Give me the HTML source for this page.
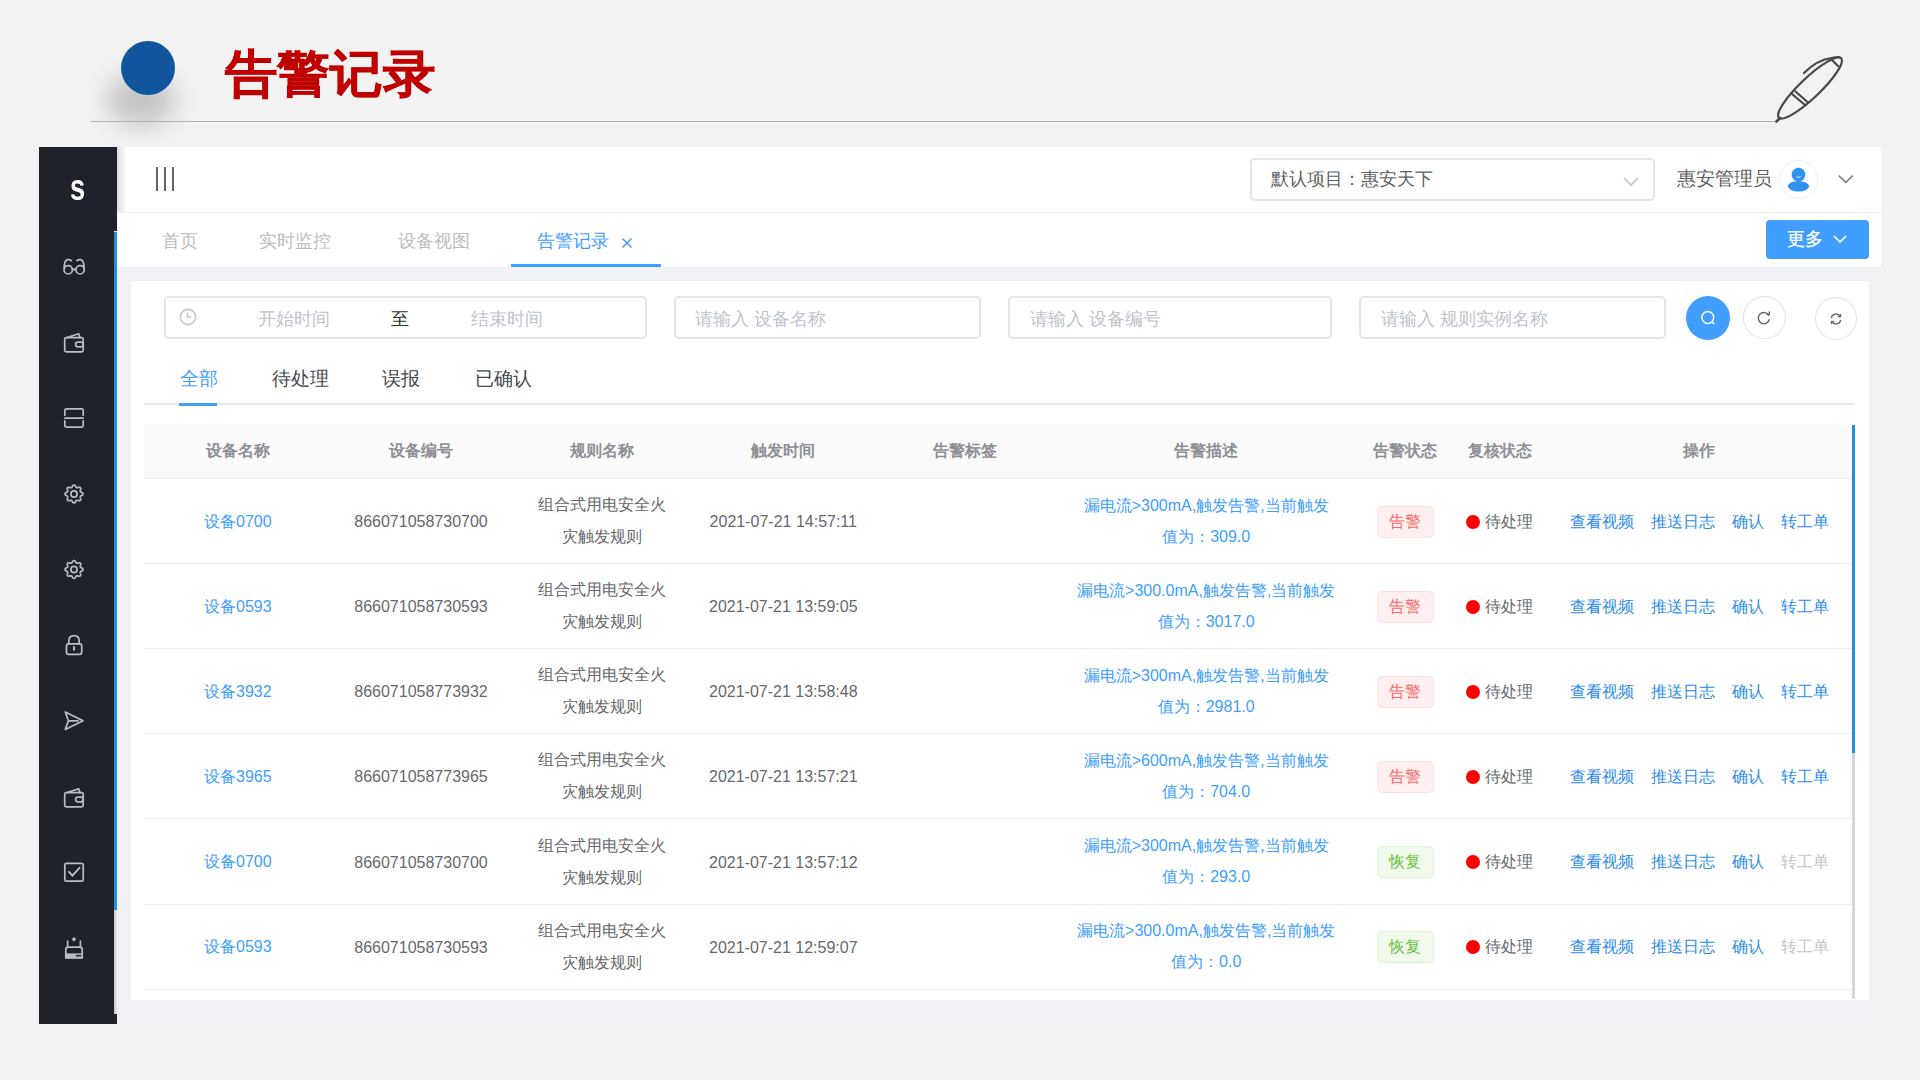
<!DOCTYPE html>
<html><head><meta charset="utf-8">
<style>
*{margin:0;padding:0;box-sizing:border-box}
html,body{width:1920px;height:1080px;overflow:hidden;background:#f2f2f2;font-family:"Liberation Sans",sans-serif;color:#606266}
.a{position:absolute}
.t{position:absolute;white-space:nowrap;line-height:1}
#title{left:225px;top:49px;font-size:50px;font-weight:bold;color:#c00000;-webkit-text-stroke:0.6px #c00000;transform:scaleX(1.05);transform-origin:0 0}
#hline{left:91px;top:121px;width:1686px;height:1px;background:#b3b3b3}
#side{left:39px;top:147px;width:75px;height:877px;background:#1f222a}
#sidebot{left:39px;top:1014px;width:78px;height:10px;background:#1f222a}
#sbar{left:113.5px;top:232px;width:3.5px;height:678px;background:#1e8fe6}
#strack{left:113.5px;top:910px;width:3.5px;height:104px;background:linear-gradient(90deg,#c3c4c9,#eceef2)}
#main{left:117px;top:147px;width:1764px;height:877px;background:#f0f1f4}
#hdr{left:117px;top:147px;width:1764px;height:66px;background:#fff;border-bottom:1px solid #f0f0f0}
#tabs{left:117px;top:213px;width:1764px;height:54px;background:#fff}
#card{left:131px;top:281px;width:1738px;height:719px;background:#fff}
.inp{position:absolute;top:295.5px;height:43px;border:2px solid #e3e5ea;border-radius:5px;background:#fff}
.ph{color:#c0c4cc;font-size:18px}
.th{position:absolute;top:444px;font-size:16px;color:#8d8f94;font-weight:bold;line-height:1;white-space:nowrap}
.cell{position:absolute;font-size:16px;line-height:1;white-space:nowrap;color:#66686c}
.lk{color:#409eff}
.rowline{position:absolute;left:144px;width:1708px;height:1px;background:#ebeef5}
.tag{position:absolute;width:57px;height:32px;border-radius:5px;font-size:16px;line-height:30px;text-align:center}
.tr{background:#fef0f0;border:1px solid #fde2e2;color:#f56c6c}
.tg{background:#f0f9eb;border:1px solid #e1f3d8;color:#67c23a}
.dot{position:absolute;width:14px;height:14px;border-radius:50%;background:#f00}
.ico{position:absolute;left:62px;width:24px;height:24px}
</style></head><body>
<!-- slide header -->
<div class="a" style="left:107px;top:74px;width:68px;height:52px;border-radius:50%;background:rgba(0,0,0,0.19);filter:blur(12px)"></div>
<div class="a" style="left:121px;top:41px;width:54px;height:54px;border-radius:50%;background:#11559d"></div>
<div class="t" id="title">告警记录</div>
<div class="a" id="hline"></div>
<svg class="a" style="left:1740px;top:40px" width="120" height="100" viewBox="1740 40 120 100">
<g fill="none" stroke="#474747" stroke-width="2.2" stroke-linecap="round">
<ellipse cx="1810" cy="88" rx="43" ry="10" transform="rotate(-43.6 1810 88)"/>
<path d="M1776.5 121.5 L1780 118" stroke-width="2.6"/>
<path d="M1804 73 Q1817 60 1831 58 Q1837 57 1839 57"/>
<path d="M1831 59 L1838 66"/>
<path d="M1792 94 L1805 105"/>
<path d="M1795.5 91.5 L1808 102.5"/>
</g>
</svg>

<div class="a" id="main"></div>
<div class="a" id="side"></div>
<div class="a" id="sidebot"></div>
<div class="a" style="left:113px;top:147px;width:4.4px;height:84px;background:#1f222a"></div>
<div class="a" id="sbar"></div>
<div class="a" id="strack"></div>
<div class="a" id="hdr"></div>
<div class="a" id="tabs"></div>
<div class="a" style="left:117px;top:147px;width:10px;height:65px;background:linear-gradient(90deg,rgba(0,0,0,0.13),rgba(0,0,0,0))"></div>
<div class="a" id="card"></div>

<!--ICONS-->
<svg class="a" style="left:0;top:0" width="120" height="1080" viewBox="0 0 120 1080"><g fill="none" stroke="#b9bdc6" stroke-width="1.7" stroke-linecap="round"><circle cx="68.2" cy="269.8" r="4.2"/><circle cx="80.1" cy="269.8" r="4.2"/><path d="M72.2 268.6 Q74.15 270.6 76.1 268.6"/><path d="M64.3 268.5 Q64 260.5 67.5 259.6 Q70 259.3 71.3 260.6"/><path d="M84 268.5 Q84.3 260.5 80.8 259.6 Q78.3 259.3 77 260.6"/><rect x="64.7" y="337.6" width="18.5" height="14.3" rx="1.6"/><path d="M67 337.6 L78.6 333.8 L80 337.6"/><rect x="75.6" y="342.2" width="7.6" height="4.6" rx="2.3"/><path d="M64.8 415.2 V410.4 Q64.8 408.8 66.4 408.8 H81.6 Q83.2 408.8 83.2 410.4 V415.2"/><path d="M64.8 418.1 H83.2"/><path d="M64.8 420.8 V425.6 Q64.8 427.2 66.4 427.2 H81.6 Q83.2 427.2 83.2 425.6 V420.8"/><path d="M82.90 494.00 L82.88 494.23 L82.83 494.46 L82.74 494.69 L82.61 494.90 L82.44 495.11 L82.24 495.30 L81.97 495.48 L81.53 495.60 L81.25 495.74 L81.04 495.89 L80.85 496.03 L80.69 496.17 L80.56 496.32 L80.46 496.48 L80.37 496.64 L80.32 496.81 L80.28 497.00 L80.27 497.20 L80.28 497.41 L80.31 497.64 L80.36 497.90 L80.45 498.19 L80.68 498.59 L80.75 498.90 L80.76 499.18 L80.73 499.45 L80.66 499.69 L80.57 499.91 L80.44 500.12 L80.29 500.29 L80.12 500.44 L79.91 500.57 L79.69 500.66 L79.45 500.73 L79.18 500.76 L78.90 500.75 L78.59 500.68 L78.19 500.45 L77.90 500.36 L77.64 500.31 L77.41 500.28 L77.20 500.27 L77.00 500.28 L76.81 500.32 L76.64 500.37 L76.48 500.46 L76.32 500.56 L76.17 500.69 L76.03 500.85 L75.89 501.04 L75.74 501.25 L75.60 501.53 L75.48 501.97 L75.30 502.24 L75.11 502.44 L74.90 502.61 L74.69 502.74 L74.46 502.83 L74.23 502.88 L74.00 502.90 L73.77 502.88 L73.54 502.83 L73.31 502.74 L73.10 502.61 L72.89 502.44 L72.70 502.24 L72.52 501.97 L72.40 501.53 L72.26 501.25 L72.11 501.04 L71.97 500.85 L71.83 500.69 L71.68 500.56 L71.52 500.46 L71.36 500.37 L71.19 500.32 L71.00 500.28 L70.80 500.27 L70.59 500.28 L70.36 500.31 L70.10 500.36 L69.81 500.45 L69.41 500.68 L69.10 500.75 L68.82 500.76 L68.55 500.73 L68.31 500.66 L68.09 500.57 L67.88 500.44 L67.71 500.29 L67.56 500.12 L67.43 499.91 L67.34 499.69 L67.27 499.45 L67.24 499.18 L67.25 498.90 L67.32 498.59 L67.55 498.19 L67.64 497.90 L67.69 497.64 L67.72 497.41 L67.73 497.20 L67.72 497.00 L67.68 496.81 L67.63 496.64 L67.54 496.48 L67.44 496.32 L67.31 496.17 L67.15 496.03 L66.96 495.89 L66.75 495.74 L66.47 495.60 L66.03 495.48 L65.76 495.30 L65.56 495.11 L65.39 494.90 L65.26 494.69 L65.17 494.46 L65.12 494.23 L65.10 494.00 L65.12 493.77 L65.17 493.54 L65.26 493.31 L65.39 493.10 L65.56 492.89 L65.76 492.70 L66.03 492.52 L66.47 492.40 L66.75 492.26 L66.96 492.11 L67.15 491.97 L67.31 491.83 L67.44 491.68 L67.54 491.52 L67.63 491.36 L67.68 491.19 L67.72 491.00 L67.73 490.80 L67.72 490.59 L67.69 490.36 L67.64 490.10 L67.55 489.81 L67.32 489.41 L67.25 489.10 L67.24 488.82 L67.27 488.55 L67.34 488.31 L67.43 488.09 L67.56 487.88 L67.71 487.71 L67.88 487.56 L68.09 487.43 L68.31 487.34 L68.55 487.27 L68.82 487.24 L69.10 487.25 L69.41 487.32 L69.81 487.55 L70.10 487.64 L70.36 487.69 L70.59 487.72 L70.80 487.73 L71.00 487.72 L71.19 487.68 L71.36 487.63 L71.52 487.54 L71.68 487.44 L71.83 487.31 L71.97 487.15 L72.11 486.96 L72.26 486.75 L72.40 486.47 L72.52 486.03 L72.70 485.76 L72.89 485.56 L73.10 485.39 L73.31 485.26 L73.54 485.17 L73.77 485.12 L74.00 485.10 L74.23 485.12 L74.46 485.17 L74.69 485.26 L74.90 485.39 L75.11 485.56 L75.30 485.76 L75.48 486.03 L75.60 486.47 L75.74 486.75 L75.89 486.96 L76.03 487.15 L76.17 487.31 L76.32 487.44 L76.48 487.54 L76.64 487.63 L76.81 487.68 L77.00 487.72 L77.20 487.73 L77.41 487.72 L77.64 487.69 L77.90 487.64 L78.19 487.55 L78.59 487.32 L78.90 487.25 L79.18 487.24 L79.45 487.27 L79.69 487.34 L79.91 487.43 L80.12 487.56 L80.29 487.71 L80.44 487.88 L80.57 488.09 L80.66 488.31 L80.73 488.55 L80.76 488.82 L80.75 489.10 L80.68 489.41 L80.45 489.81 L80.36 490.10 L80.31 490.36 L80.28 490.59 L80.27 490.80 L80.28 491.00 L80.32 491.19 L80.37 491.36 L80.46 491.52 L80.56 491.68 L80.69 491.83 L80.85 491.97 L81.04 492.11 L81.25 492.26 L81.53 492.40 L81.97 492.52 L82.24 492.70 L82.44 492.89 L82.61 493.10 L82.74 493.31 L82.83 493.54 L82.88 493.77 L82.90 494.00Z" stroke-linejoin="round"/><circle cx="74" cy="494" r="3.1"/><path d="M82.90 569.50 L82.88 569.73 L82.83 569.96 L82.74 570.19 L82.61 570.40 L82.44 570.61 L82.24 570.80 L81.97 570.98 L81.53 571.10 L81.25 571.24 L81.04 571.39 L80.85 571.53 L80.69 571.67 L80.56 571.82 L80.46 571.98 L80.37 572.14 L80.32 572.31 L80.28 572.50 L80.27 572.70 L80.28 572.91 L80.31 573.14 L80.36 573.40 L80.45 573.69 L80.68 574.09 L80.75 574.40 L80.76 574.68 L80.73 574.95 L80.66 575.19 L80.57 575.41 L80.44 575.62 L80.29 575.79 L80.12 575.94 L79.91 576.07 L79.69 576.16 L79.45 576.23 L79.18 576.26 L78.90 576.25 L78.59 576.18 L78.19 575.95 L77.90 575.86 L77.64 575.81 L77.41 575.78 L77.20 575.77 L77.00 575.78 L76.81 575.82 L76.64 575.87 L76.48 575.96 L76.32 576.06 L76.17 576.19 L76.03 576.35 L75.89 576.54 L75.74 576.75 L75.60 577.03 L75.48 577.47 L75.30 577.74 L75.11 577.94 L74.90 578.11 L74.69 578.24 L74.46 578.33 L74.23 578.38 L74.00 578.40 L73.77 578.38 L73.54 578.33 L73.31 578.24 L73.10 578.11 L72.89 577.94 L72.70 577.74 L72.52 577.47 L72.40 577.03 L72.26 576.75 L72.11 576.54 L71.97 576.35 L71.83 576.19 L71.68 576.06 L71.52 575.96 L71.36 575.87 L71.19 575.82 L71.00 575.78 L70.80 575.77 L70.59 575.78 L70.36 575.81 L70.10 575.86 L69.81 575.95 L69.41 576.18 L69.10 576.25 L68.82 576.26 L68.55 576.23 L68.31 576.16 L68.09 576.07 L67.88 575.94 L67.71 575.79 L67.56 575.62 L67.43 575.41 L67.34 575.19 L67.27 574.95 L67.24 574.68 L67.25 574.40 L67.32 574.09 L67.55 573.69 L67.64 573.40 L67.69 573.14 L67.72 572.91 L67.73 572.70 L67.72 572.50 L67.68 572.31 L67.63 572.14 L67.54 571.98 L67.44 571.82 L67.31 571.67 L67.15 571.53 L66.96 571.39 L66.75 571.24 L66.47 571.10 L66.03 570.98 L65.76 570.80 L65.56 570.61 L65.39 570.40 L65.26 570.19 L65.17 569.96 L65.12 569.73 L65.10 569.50 L65.12 569.27 L65.17 569.04 L65.26 568.81 L65.39 568.60 L65.56 568.39 L65.76 568.20 L66.03 568.02 L66.47 567.90 L66.75 567.76 L66.96 567.61 L67.15 567.47 L67.31 567.33 L67.44 567.18 L67.54 567.02 L67.63 566.86 L67.68 566.69 L67.72 566.50 L67.73 566.30 L67.72 566.09 L67.69 565.86 L67.64 565.60 L67.55 565.31 L67.32 564.91 L67.25 564.60 L67.24 564.32 L67.27 564.05 L67.34 563.81 L67.43 563.59 L67.56 563.38 L67.71 563.21 L67.88 563.06 L68.09 562.93 L68.31 562.84 L68.55 562.77 L68.82 562.74 L69.10 562.75 L69.41 562.82 L69.81 563.05 L70.10 563.14 L70.36 563.19 L70.59 563.22 L70.80 563.23 L71.00 563.22 L71.19 563.18 L71.36 563.13 L71.52 563.04 L71.68 562.94 L71.83 562.81 L71.97 562.65 L72.11 562.46 L72.26 562.25 L72.40 561.97 L72.52 561.53 L72.70 561.26 L72.89 561.06 L73.10 560.89 L73.31 560.76 L73.54 560.67 L73.77 560.62 L74.00 560.60 L74.23 560.62 L74.46 560.67 L74.69 560.76 L74.90 560.89 L75.11 561.06 L75.30 561.26 L75.48 561.53 L75.60 561.97 L75.74 562.25 L75.89 562.46 L76.03 562.65 L76.17 562.81 L76.32 562.94 L76.48 563.04 L76.64 563.13 L76.81 563.18 L77.00 563.22 L77.20 563.23 L77.41 563.22 L77.64 563.19 L77.90 563.14 L78.19 563.05 L78.59 562.82 L78.90 562.75 L79.18 562.74 L79.45 562.77 L79.69 562.84 L79.91 562.93 L80.12 563.06 L80.29 563.21 L80.44 563.38 L80.57 563.59 L80.66 563.81 L80.73 564.05 L80.76 564.32 L80.75 564.60 L80.68 564.91 L80.45 565.31 L80.36 565.60 L80.31 565.86 L80.28 566.09 L80.27 566.30 L80.28 566.50 L80.32 566.69 L80.37 566.86 L80.46 567.02 L80.56 567.18 L80.69 567.33 L80.85 567.47 L81.04 567.61 L81.25 567.76 L81.53 567.90 L81.97 568.02 L82.24 568.20 L82.44 568.39 L82.61 568.60 L82.74 568.81 L82.83 569.04 L82.88 569.27 L82.90 569.50Z" stroke-linejoin="round"/><circle cx="74" cy="569.5" r="3.1"/><path d="M68.8 643.9 V641 Q68.8 635.6 74 635.6 Q79.2 635.6 79.2 641 V643.9"/><rect x="66.5" y="643.9" width="15.2" height="10.4" rx="2"/><path d="M74 647 V649.8" stroke-width="2"/><path d="M65.3 712 L83 720.8 L65.3 729.4 L68.4 720.8 Z" stroke-linejoin="round"/><path d="M68.4 720.8 H78"/><rect x="64.7" y="792.6" width="18.5" height="14.3" rx="1.6"/><path d="M67 792.6 L78.6 788.8 L80 792.6"/><rect x="75.6" y="797.2" width="7.6" height="4.6" rx="2.3"/><rect x="64.8" y="863.4" width="18.4" height="17.8" rx="1.5"/><path d="M69 871.8 L72.4 875.6 L79.5 867.8" stroke-width="1.9"/><path d="M74 937 L76.3 939.3 L74 941.6 L71.7 939.3 Z" fill="#b9bdc6" stroke="none"/><path d="M67.6 941 V946.8 M80.4 941 V946.8"/><path d="M65.8 958 V949.6 Q65.8 947.2 68.2 947.2 H79.8 Q82.2 947.2 82.2 949.6 V958 Z"/><rect x="65" y="953.4" width="18" height="5" fill="#b9bdc6" stroke="none"/><rect x="75.8" y="954.9" width="5.6" height="1.5" fill="#1f222a" stroke="none"/></g></svg>
<!--/ICONS-->
<!-- sidebar logo -->
<div class="t" style="left:70px;top:169.5px;font-size:36px;font-weight:bold;color:#fff;transform:scaleX(0.76);transform-origin:0 0">s</div>
<!-- hamburger -->
<div class="a" style="left:156px;top:167px;width:2.2px;height:24px;background:#60646b"></div>
<div class="a" style="left:164px;top:167px;width:2.2px;height:24px;background:#60646b"></div>
<div class="a" style="left:172px;top:167px;width:2.2px;height:24px;background:#60646b"></div>
<!-- project select -->
<div class="a" style="left:1250px;top:157.5px;width:405px;height:43px;border:2px solid #e3e5ea;border-radius:5px"></div>
<div class="t" style="left:1271px;top:170.5px;font-size:17.7px;color:#606266">默认项目：惠安天下</div>
<svg class="a" style="left:1622px;top:175px" width="18" height="12" viewBox="0 0 18 12"><path d="M2 3 L9 10 L16 3" fill="none" stroke="#c0c4cc" stroke-width="1.6"/></svg>
<div class="t" style="left:1677px;top:169.5px;font-size:18.6px;color:#606266">惠安管理员</div>
<div class="a" style="left:1779px;top:159.5px;width:39px;height:39px;border-radius:50%;border:1px solid #f0f0f2;background:#fff"></div>
<svg class="a" style="left:1784px;top:164px" width="29" height="29" viewBox="0 0 29 29">
<ellipse cx="14.5" cy="22.2" rx="10.6" ry="5.3" fill="#2f93f0"/>
<circle cx="14.5" cy="10.6" r="6.9" fill="#2f93f0"/>
<path d="M12.4 12.6 Q14.5 14.2 16.6 12.6" fill="none" stroke="#fff" stroke-width="0.9"/>
</svg>
<svg class="a" style="left:1837px;top:172px" width="18" height="12" viewBox="0 0 18 12"><path d="M1.8 3.6 L8.8 10.4 L15.8 3.6" fill="none" stroke="#7d8086" stroke-width="1.5"/></svg>
<!-- tabs -->
<div class="t" style="left:162px;top:232px;font-size:18px;color:#bdbdbd">首页</div>
<div class="t" style="left:259px;top:232px;font-size:18px;color:#bdbdbd">实时监控</div>
<div class="t" style="left:398px;top:232px;font-size:18px;color:#bdbdbd">设备视图</div>
<div class="t" style="left:537px;top:232px;font-size:18px;color:#409eff">告警记录</div>
<svg class="a" style="left:620px;top:236px" width="14" height="14" viewBox="0 0 14 14"><path d="M2.5 2.5 L11.5 11.5 M11.5 2.5 L2.5 11.5" stroke="#409eff" stroke-width="1.5"/></svg>
<div class="a" style="left:511px;top:264px;width:150px;height:3px;background:#409eff"></div>
<div class="a" style="left:1766px;top:220px;width:103px;height:39px;border-radius:4px;background:#409eff"></div>
<div class="t" style="left:1787px;top:230px;font-size:18px;color:#fff;-webkit-text-stroke:0.3px #fff">更多</div>
<svg class="a" style="left:1831.5px;top:233px" width="16" height="12" viewBox="0 0 16 12"><path d="M2 3 L8 9 L14 3" fill="none" stroke="#fff" stroke-width="1.6"/></svg>


<!--BODY2-->
<div class="inp" style="left:163.5px;width:483px"></div>
<svg class="a" style="left:177px;top:305.6px" width="22" height="22" viewBox="0 0 22 22"><circle cx="11" cy="11" r="7.6" fill="none" stroke="#c6c8cd" stroke-width="1.6"/><path d="M10.5 6.6 V11 H14" fill="none" stroke="#c6c8cd" stroke-width="1.6"/></svg>
<div class="t ph" style="left:258px;top:310px">开始时间</div>
<div class="t" style="left:391px;top:310px;font-size:18px;color:#303133">至</div>
<div class="t ph" style="left:471px;top:310px">结束时间</div>
<div class="inp" style="left:674px;width:306.5px"></div>
<div class="t ph" style="left:695px;top:310px">请输入 设备名称</div>
<div class="inp" style="left:1008px;width:324px"></div>
<div class="t ph" style="left:1030px;top:310px">请输入 设备编号</div>
<div class="inp" style="left:1359px;width:306.5px"></div>
<div class="t ph" style="left:1381px;top:310px">请输入 规则实例名称</div>
<div class="a" style="left:1686px;top:295.5px;width:43.5px;height:44px;border-radius:50%;background:#409eff"></div>
<svg class="a" style="left:1695.7px;top:305.5px" width="24" height="24" viewBox="0 0 24 24"><circle cx="11.8" cy="11.5" r="5.9" fill="none" stroke="#fff" stroke-width="1.5"/><path d="M15.9 15.6 L18.2 18" stroke="#fff" stroke-width="1.5"/></svg>
<div class="a" style="left:1743px;top:296px;width:42.5px;height:43px;border-radius:50%;border:1.2px solid #e2e3e6;background:#fff"></div>
<svg class="a" style="left:1752.3px;top:306px" width="24" height="24" viewBox="0 0 24 24"><path d="M16.9 9.6 A5.6 5.6 0 1 0 17.4 13.2" fill="none" stroke="#606266" stroke-width="1.4"/><path d="M14.6 8.4 L17.4 8.4 L17.4 5.6" fill="none" stroke="#606266" stroke-width="1.4"/></svg>
<div class="a" style="left:1814.5px;top:296.5px;width:42.5px;height:43.5px;border-radius:50%;border:1.2px solid #e2e3e6;background:#fff"></div>
<svg class="a" style="left:1824px;top:306.5px" width="24" height="24" viewBox="0 0 24 24"><path d="M7.3 11.2 A4.8 4.8 0 0 1 16.2 9.4" fill="none" stroke="#6a6c70" stroke-width="1.4"/><path d="M16.7 12.8 A4.8 4.8 0 0 1 7.8 14.6" fill="none" stroke="#6a6c70" stroke-width="1.4"/><path d="M13.8 9.6 L16.5 9.6 L16.5 6.9" fill="none" stroke="#6a6c70" stroke-width="1.4"/><path d="M10.2 14.4 L7.5 14.4 L7.5 17.1" fill="none" stroke="#6a6c70" stroke-width="1.4"/></svg>
<div class="t" style="left:180px;top:369px;font-size:19px;color:#409eff">全部</div>
<div class="t" style="left:271.5px;top:369px;font-size:19px;color:#45484d">待处理</div>
<div class="t" style="left:382px;top:369px;font-size:19px;color:#45484d">误报</div>
<div class="t" style="left:474.5px;top:369px;font-size:19px;color:#45484d">已确认</div>
<div class="a" style="left:144px;top:403px;width:1711px;height:2px;background:#e4e7ed"></div>
<div class="a" style="left:179px;top:403px;width:38px;height:3px;background:#409eff"></div>
<div class="a" style="left:144px;top:425px;width:1708px;height:54px;background:#fafafa;border-bottom:1px solid #ebeef5"></div>
<div class="th" style="left:37.80000000000001px;width:400px;text-align:center;top:443px;">设备名称</div>
<div class="th" style="left:221px;width:400px;text-align:center;top:443px;">设备编号</div>
<div class="th" style="left:401.9px;width:400px;text-align:center;top:443px;">规则名称</div>
<div class="th" style="left:583.3px;width:400px;text-align:center;top:443px;">触发时间</div>
<div class="th" style="left:764.7px;width:400px;text-align:center;top:443px;">告警标签</div>
<div class="th" style="left:1006.2px;width:400px;text-align:center;top:443px;">告警描述</div>
<div class="th" style="left:1205px;width:400px;text-align:center;top:443px;">告警状态</div>
<div class="th" style="left:1299.5px;width:400px;text-align:center;top:443px;">复核状态</div>
<div class="th" style="left:1499.3px;width:400px;text-align:center;top:443px;">操作</div>
<div class="cell lk" style="left:37.80000000000001px;width:400px;text-align:center;top:513.5px;">设备0700</div>
<div class="cell" style="left:221px;width:400px;text-align:center;top:514.0px;"><span style="font-size:16px">866071058730700</span></div>
<div class="cell" style="left:401.9px;width:400px;text-align:center;top:497.0px;">组合式用电安全火</div>
<div class="cell" style="left:401.9px;width:400px;text-align:center;top:529.0px;">灾触发规则</div>
<div class="cell" style="left:583.3px;width:400px;text-align:center;top:514.0px;"><span style="font-size:16px">2021-07-21 14:57:11</span></div>
<div class="cell lk" style="left:1006.2px;width:400px;text-align:center;top:497.5px;">漏电流>300mA,触发告警,当前触发</div>
<div class="cell lk" style="left:1006.2px;width:400px;text-align:center;top:528.5px;">值为：309.0</div>
<div class="tag tr" style="left:1376.5px;top:505.5px">告警</div>
<div class="dot" style="left:1465.5px;top:514.5px"></div>
<div class="cell" style="left:1485px;top:513.5px">待处理</div>
<div class="cell" style="left:1570px;top:513.5px;color:#2d8cf0">查看视频</div>
<div class="cell" style="left:1650.5px;top:513.5px;color:#2d8cf0">推送日志</div>
<div class="cell" style="left:1732px;top:513.5px;color:#2d8cf0">确认</div>
<div class="cell" style="left:1780.5px;top:513.5px;color:#2d8cf0">转工单</div>
<div class="rowline" style="top:563px"></div>
<div class="cell lk" style="left:37.80000000000001px;width:400px;text-align:center;top:598.65px;">设备0593</div>
<div class="cell" style="left:221px;width:400px;text-align:center;top:599.15px;"><span style="font-size:16px">866071058730593</span></div>
<div class="cell" style="left:401.9px;width:400px;text-align:center;top:582.15px;">组合式用电安全火</div>
<div class="cell" style="left:401.9px;width:400px;text-align:center;top:614.15px;">灾触发规则</div>
<div class="cell" style="left:583.3px;width:400px;text-align:center;top:599.15px;"><span style="font-size:16px">2021-07-21 13:59:05</span></div>
<div class="cell lk" style="left:1006.2px;width:400px;text-align:center;top:582.65px;">漏电流>300.0mA,触发告警,当前触发</div>
<div class="cell lk" style="left:1006.2px;width:400px;text-align:center;top:613.65px;">值为：3017.0</div>
<div class="tag tr" style="left:1376.5px;top:590.65px">告警</div>
<div class="dot" style="left:1465.5px;top:599.65px"></div>
<div class="cell" style="left:1485px;top:598.65px">待处理</div>
<div class="cell" style="left:1570px;top:598.65px;color:#2d8cf0">查看视频</div>
<div class="cell" style="left:1650.5px;top:598.65px;color:#2d8cf0">推送日志</div>
<div class="cell" style="left:1732px;top:598.65px;color:#2d8cf0">确认</div>
<div class="cell" style="left:1780.5px;top:598.65px;color:#2d8cf0">转工单</div>
<div class="rowline" style="top:648px"></div>
<div class="cell lk" style="left:37.80000000000001px;width:400px;text-align:center;top:683.8px;">设备3932</div>
<div class="cell" style="left:221px;width:400px;text-align:center;top:684.3px;"><span style="font-size:16px">866071058773932</span></div>
<div class="cell" style="left:401.9px;width:400px;text-align:center;top:667.3px;">组合式用电安全火</div>
<div class="cell" style="left:401.9px;width:400px;text-align:center;top:699.3px;">灾触发规则</div>
<div class="cell" style="left:583.3px;width:400px;text-align:center;top:684.3px;"><span style="font-size:16px">2021-07-21 13:58:48</span></div>
<div class="cell lk" style="left:1006.2px;width:400px;text-align:center;top:667.8px;">漏电流>300mA,触发告警,当前触发</div>
<div class="cell lk" style="left:1006.2px;width:400px;text-align:center;top:698.8px;">值为：2981.0</div>
<div class="tag tr" style="left:1376.5px;top:675.8px">告警</div>
<div class="dot" style="left:1465.5px;top:684.8px"></div>
<div class="cell" style="left:1485px;top:683.8px">待处理</div>
<div class="cell" style="left:1570px;top:683.8px;color:#2d8cf0">查看视频</div>
<div class="cell" style="left:1650.5px;top:683.8px;color:#2d8cf0">推送日志</div>
<div class="cell" style="left:1732px;top:683.8px;color:#2d8cf0">确认</div>
<div class="cell" style="left:1780.5px;top:683.8px;color:#2d8cf0">转工单</div>
<div class="rowline" style="top:733px"></div>
<div class="cell lk" style="left:37.80000000000001px;width:400px;text-align:center;top:768.95px;">设备3965</div>
<div class="cell" style="left:221px;width:400px;text-align:center;top:769.45px;"><span style="font-size:16px">866071058773965</span></div>
<div class="cell" style="left:401.9px;width:400px;text-align:center;top:752.45px;">组合式用电安全火</div>
<div class="cell" style="left:401.9px;width:400px;text-align:center;top:784.45px;">灾触发规则</div>
<div class="cell" style="left:583.3px;width:400px;text-align:center;top:769.45px;"><span style="font-size:16px">2021-07-21 13:57:21</span></div>
<div class="cell lk" style="left:1006.2px;width:400px;text-align:center;top:752.95px;">漏电流>600mA,触发告警,当前触发</div>
<div class="cell lk" style="left:1006.2px;width:400px;text-align:center;top:783.95px;">值为：704.0</div>
<div class="tag tr" style="left:1376.5px;top:760.95px">告警</div>
<div class="dot" style="left:1465.5px;top:769.95px"></div>
<div class="cell" style="left:1485px;top:768.95px">待处理</div>
<div class="cell" style="left:1570px;top:768.95px;color:#2d8cf0">查看视频</div>
<div class="cell" style="left:1650.5px;top:768.95px;color:#2d8cf0">推送日志</div>
<div class="cell" style="left:1732px;top:768.95px;color:#2d8cf0">确认</div>
<div class="cell" style="left:1780.5px;top:768.95px;color:#2d8cf0">转工单</div>
<div class="rowline" style="top:818px"></div>
<div class="cell lk" style="left:37.80000000000001px;width:400px;text-align:center;top:854.1px;">设备0700</div>
<div class="cell" style="left:221px;width:400px;text-align:center;top:854.6px;"><span style="font-size:16px">866071058730700</span></div>
<div class="cell" style="left:401.9px;width:400px;text-align:center;top:837.6px;">组合式用电安全火</div>
<div class="cell" style="left:401.9px;width:400px;text-align:center;top:869.6px;">灾触发规则</div>
<div class="cell" style="left:583.3px;width:400px;text-align:center;top:854.6px;"><span style="font-size:16px">2021-07-21 13:57:12</span></div>
<div class="cell lk" style="left:1006.2px;width:400px;text-align:center;top:838.1px;">漏电流>300mA,触发告警,当前触发</div>
<div class="cell lk" style="left:1006.2px;width:400px;text-align:center;top:869.1px;">值为：293.0</div>
<div class="tag tg" style="left:1376.5px;top:846.1px">恢复</div>
<div class="dot" style="left:1465.5px;top:855.1px"></div>
<div class="cell" style="left:1485px;top:854.1px">待处理</div>
<div class="cell" style="left:1570px;top:854.1px;color:#2d8cf0">查看视频</div>
<div class="cell" style="left:1650.5px;top:854.1px;color:#2d8cf0">推送日志</div>
<div class="cell" style="left:1732px;top:854.1px;color:#2d8cf0">确认</div>
<div class="cell" style="left:1780.5px;top:854.1px;color:#c0c4cc">转工单</div>
<div class="rowline" style="top:904px"></div>
<div class="cell lk" style="left:37.80000000000001px;width:400px;text-align:center;top:939.25px;">设备0593</div>
<div class="cell" style="left:221px;width:400px;text-align:center;top:939.75px;"><span style="font-size:16px">866071058730593</span></div>
<div class="cell" style="left:401.9px;width:400px;text-align:center;top:922.75px;">组合式用电安全火</div>
<div class="cell" style="left:401.9px;width:400px;text-align:center;top:954.75px;">灾触发规则</div>
<div class="cell" style="left:583.3px;width:400px;text-align:center;top:939.75px;"><span style="font-size:16px">2021-07-21 12:59:07</span></div>
<div class="cell lk" style="left:1006.2px;width:400px;text-align:center;top:923.25px;">漏电流>300.0mA,触发告警,当前触发</div>
<div class="cell lk" style="left:1006.2px;width:400px;text-align:center;top:954.25px;">值为：0.0</div>
<div class="tag tg" style="left:1376.5px;top:931.25px">恢复</div>
<div class="dot" style="left:1465.5px;top:940.25px"></div>
<div class="cell" style="left:1485px;top:939.25px">待处理</div>
<div class="cell" style="left:1570px;top:939.25px;color:#2d8cf0">查看视频</div>
<div class="cell" style="left:1650.5px;top:939.25px;color:#2d8cf0">推送日志</div>
<div class="cell" style="left:1732px;top:939.25px;color:#2d8cf0">确认</div>
<div class="cell" style="left:1780.5px;top:939.25px;color:#c0c4cc">转工单</div>
<div class="rowline" style="top:989px"></div>
<div class="a" style="left:1851.5px;top:425px;width:3px;height:328px;background:#1e8fe6"></div>
<div class="a" style="left:1851.5px;top:753px;width:3px;height:246px;background:#d5d6da"></div>
<!--/BODY2-->
</body></html>
